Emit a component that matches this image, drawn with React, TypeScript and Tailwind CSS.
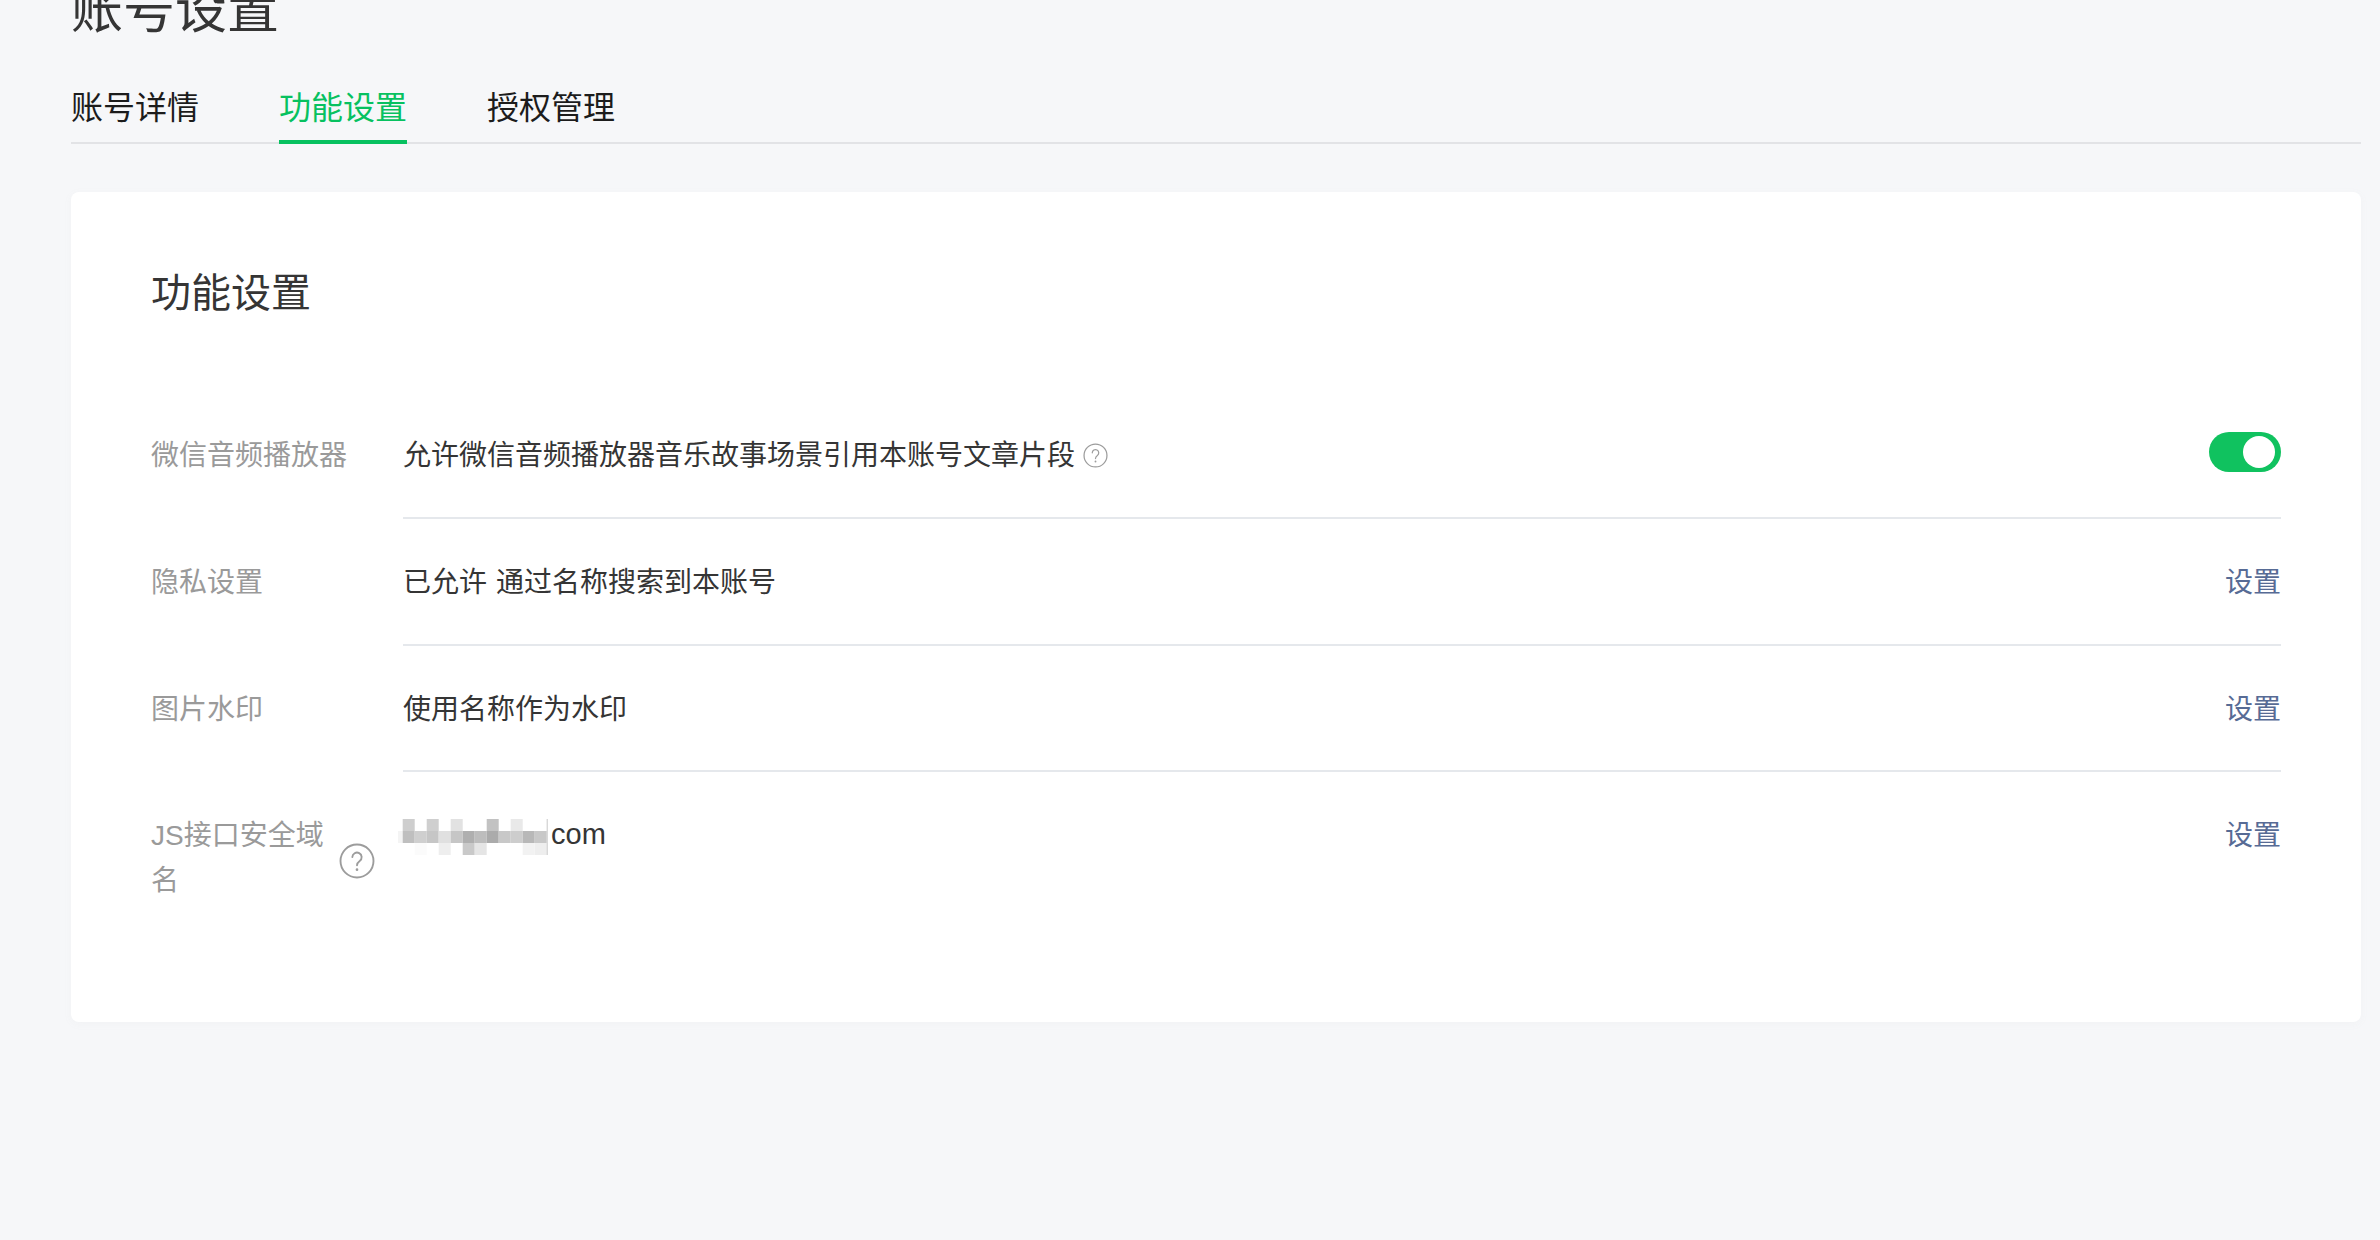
import React from 'react';

const FONT = 'font-["Liberation_Sans","Noto_Sans_CJK_SC",sans-serif]';

const TABS = [
  { label: '账号详情', active: false },
  { label: '功能设置', active: true },
  { label: '授权管理', active: false },
];

const MOSAIC: [number, number, string][] = [
  // col, row, colour
  [1, 0, '#cecece'],
  [3, 0, '#cfcfcf'],
  [5, 0, '#e2e2e2'],
  [8, 0, '#c2c2c2'],
  [10, 0, '#e9e9e9'],
  [1, 1, '#bfbfbf'],
  [2, 1, '#cfcfcf'],
  [3, 1, '#c6c6c6'],
  [4, 1, '#e0e0e0'],
  [5, 1, '#c6c6c6'],
  [6, 1, '#afafaf'],
  [7, 1, '#bdbdbd'],
  [8, 1, '#ababab'],
  [9, 1, '#c8c8c8'],
  [10, 1, '#cdcdcd'],
  [11, 1, '#b8b8b8'],
  [12, 1, '#c8c8c8'],
  [2, 2, '#fbfbfb'],
  [4, 2, '#eeeeee'],
  [6, 2, '#c9c9c9'],
  [7, 2, '#e5e5e5'],
  [11, 2, '#f2f2f2'],
  [12, 2, '#eeeeee'],
];

const HelpIcon: React.FC<{ className?: string; strokeWidth?: number }> = ({ className, strokeWidth = 1 }) => (
  <svg viewBox="0 0 24 24" fill="none" stroke="#9c9c9c" strokeWidth={strokeWidth} className={className}>
    <circle cx="12" cy="12" r="11" />
    <path d="M8.9 9.4a3.1 3.1 0 1 1 4.9 2.6c-1.1.8-1.8 1.4-1.8 2.9" strokeLinecap="round" />
    <circle cx="12" cy="17.8" r="0.9" fill="#9c9c9c" stroke="none" />
  </svg>
);

const Mosaic: React.FC = () => (
  <svg width="150" height="36" viewBox="0 0 150 36" className="shrink-0 mt-[6px] -ml-[5px]">
    <rect x="0" y="12" width="4.7" height="12" fill="#f4f4f4" />
    {MOSAIC.map(([col, row, color]) => (
      <rect key={`${col}-${row}`} x={4.7 + (col - 1) * 12} y={row * 12} width="12" height="12" fill={color} />
    ))}
    <rect x="148.7" y="0" width="1" height="36" fill="#c8c8c8" />
  </svg>
);

const Row: React.FC<{
  label: React.ReactNode;
  action: React.ReactNode;
  bottom?: string;
  children: React.ReactNode;
}> = ({ label, action, bottom = 'pb-[39px] border-b-2 border-[#e5e8ec]', children }) => (
  <div className="flex">
    <div className="w-[252px] shrink-0 pt-[41px] text-[#9a9a9a]">{label}</div>
    <div className={`flex-1 flex justify-between items-start pt-[41px] ${bottom}`}>
      <div className="flex items-start text-[#353535]">{children}</div>
      {action}
    </div>
  </div>
);

const SetLink: React.FC = () => <a className="text-[#576b95] cursor-pointer">设置</a>;

export default function App() {
  return (
    <div className={`${FONT} h-[1240px] overflow-hidden bg-[#f6f7f9] pl-[71px] pr-[19px] text-[28px] leading-[45px]`}>
      <h1 className="-mt-[26px] h-[72px] text-[52px] leading-[72px] font-normal text-[#353535]">账号设置</h1>

      <div className="mt-10 flex gap-20 border-b-2 border-[#e2e3e6]">
        {TABS.map((tab) => (
          <div
            key={tab.label}
            className={`-mb-[2px] pb-[10px] text-[32px] leading-[44px] border-b-4 ${
              tab.active ? 'text-[#07c160] border-[#07c160]' : 'text-[#1c1c1c] border-transparent'
            }`}
          >
            {tab.label}
          </div>
        ))}
      </div>

      <div className="mt-12 h-[830px] rounded-lg bg-white px-20 pt-[73px] shadow-[0_2px_8px_rgba(150,150,150,0.05)]">
        <h2 className="h-14 mb-[71px] text-[40px] leading-[56px] font-normal text-[#353535]">功能设置</h2>

        <Row
          label="微信音频播放器"
          action={
            <button type="button" className="mt-[-1px] flex h-10 w-[72px] items-center justify-end rounded-full bg-[#10c25f] pr-[6px]">
              <span className="h-8 w-8 rounded-full bg-white" />
            </button>
          }
        >
          允许微信音频播放器音乐故事场景引用本账号文章片段
          <HelpIcon className="ml-2 mt-[10px] h-[25px] w-[25px]" strokeWidth={1.2} />
        </Row>
        <Row label="隐私设置" action={<SetLink />}>
          已允许
          <span className="ml-[9px]">通过名称搜索到本账号</span>
        </Row>
        <Row label="图片水印" action={<SetLink />} bottom="pb-[38px] border-b-2 border-[#e5e8ec]">
          使用名称作为水印
        </Row>
        <Row
          bottom="pb-10"
          label={
            <div className="flex items-center">
              <span className="w-[180px]">JS接口安全域名</span>
              <HelpIcon className="ml-2 mt-[5px] h-9 w-9" strokeWidth={1.25} />
            </div>
          }
          action={<SetLink />}
        >
          <Mosaic />
          <span className="ml-[3px] -mt-[1px] text-[29px]">com</span>
        </Row>
      </div>
    </div>
  );
}
